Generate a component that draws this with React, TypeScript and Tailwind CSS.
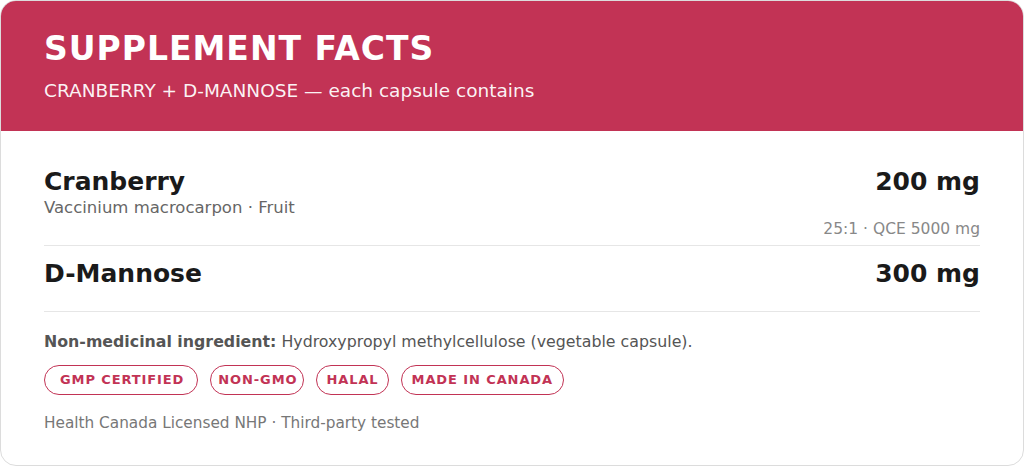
const badges = [
  { label: "GMP CERTIFIED", pad: "pl-[15px] pr-[13px]" },
  { label: "NON-GMO", pad: "pl-[7px] pr-[6px]" },
  { label: "HALAL", pad: "px-[9px]" },
  { label: "MADE IN CANADA", pad: "px-[10px]" },
];

export default function App() {
  return (
    <div className="w-[1024px] h-[466px] bg-white" style={{ fontFamily: '"DejaVu Sans", sans-serif' }}>
      <div className="h-full rounded-2xl border border-[#dcdcdc] overflow-hidden flex flex-col">
        <header className="bg-[#c23355] h-[130px] shrink-0 px-[43px] pt-[28px]">
          <h1 className="text-white font-bold text-[33px] leading-[40px] tracking-[1px]">SUPPLEMENT FACTS</h1>
          <p className="text-white/95 text-[18.5px] leading-[24px] mt-[10px]">CRANBERRY + D-MANNOSE — each capsule contains</p>
        </header>
        <div className="px-[43px] pt-[36px]">
          <div className="flex justify-between border-b border-[#e6e6e6] pb-[7px]">
            <div>
              <div className="text-[#1a1a1a] font-bold text-[25px] leading-[30px]">Cranberry</div>
              <div className="text-[#666] text-[16.5px] leading-[20px] mt-[1px]">Vaccinium macrocarpon · Fruit</div>
            </div>
            <div className="flex flex-col items-end">
              <div className="text-[#1a1a1a] font-bold text-[25px] leading-[30px]">200 mg</div>
              <div className="text-[#888] text-[15.5px] leading-[18px] mt-[23px]">25:1 · QCE 5000 mg</div>
            </div>
          </div>
          <div className="flex justify-between border-b border-[#e6e6e6] pt-[13px] pb-[22px]">
            <div className="text-[#1a1a1a] font-bold text-[25px] leading-[30px]">D-Mannose</div>
            <div className="text-[#1a1a1a] font-bold text-[25px] leading-[30px]">300 mg</div>
          </div>
          <p className="text-[#555] text-[15.8px] leading-[20px] mt-[20px]">
            <span className="font-bold">Non-medicinal ingredient:</span> Hydroxypropyl methylcellulose (vegetable capsule).
          </p>
          <div className="flex gap-3 mt-[13px]">
            {badges.map((b) => (
              <span key={b.label} className={`h-[30px] flex items-center rounded-full border-[1.5px] border-[#c23355] text-[#c23355] font-bold text-[13px] tracking-[0.9px] ${b.pad}`}>
                {b.label}
              </span>
            ))}
          </div>
          <p className="text-[#777] text-[15.3px] leading-[20px] mt-[18px]">Health Canada Licensed NHP · Third-party tested</p>
        </div>
      </div>
    </div>
  );
}
